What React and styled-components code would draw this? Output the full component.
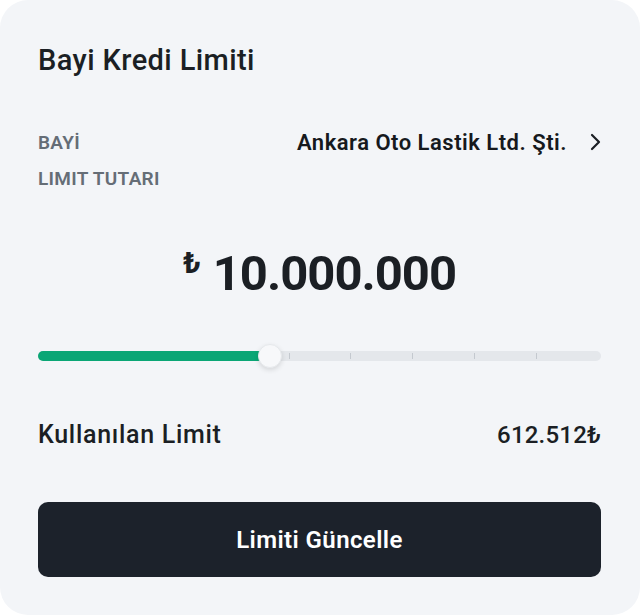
import React from 'react';
import styled, { createGlobalStyle } from 'styled-components';

const GlobalStyle = createGlobalStyle`
    html, body {
        margin: 0;
        padding: 0;
        background: #ffffff;
    }
    * {
        box-sizing: border-box;
    }
`

const ticks = [289, 350, 412, 474, 536];

export default function App() {
    const percent = 41.2;

    return (
        <>
            <GlobalStyle />
            <Card>
                <Title>Bayi Kredi Limiti</Title>

                <InfoRow>
                    <Label>BAYİ</Label>
                    <Dealer>
                        Ankara Oto Lastik Ltd. Şti.
                        <svg width="12" height="18" viewBox="0 0 12 18" fill="none">
                            <path d="M3 2l7 7-7 7" stroke="#1b1f24" strokeWidth="2.2" strokeLinecap="round" strokeLinejoin="round" />
                        </svg>
                    </Dealer>
                </InfoRow>
                <Label className='sub'>LIMIT TUTARI</Label>

                <Amount>
                    <Currency>₺</Currency>
                    <Value>10.000.000</Value>
                </Amount>

                <Slider>
                    <Track />
                    <Fill style={{ width: `${percent}%` }} />
                    {ticks.map((x) => (
                        <Tick key={x} style={{ left: x - 38 }} />
                    ))}
                    <Thumb style={{ left: `${percent}%` }} />
                </Slider>

                <UsedRow>
                    <span>Kullanılan Limit</span>
                    <span>612.512₺</span>
                </UsedRow>

                <Button>Limiti Güncelle</Button>
            </Card>
        </>
    )
}

const Card = styled.div`
    width: 640px;
    height: 615px;
    border-radius: 28px;
    background-color: #f3f5f8;
    padding: 42px 39px 0 38px;
    font-family: Roboto, "Noto Sans", sans-serif;
    color: #1b1f24;
    display: flex;
    flex-direction: column;
`
const Title = styled.h1`
    margin: 0;
    font-size: 29px;
    font-weight: 500;
    letter-spacing: 0.4px;
    line-height: 36px;
`
const InfoRow = styled.div`
    margin-top: 52px;
    display: flex;
    align-items: center;
    justify-content: space-between;
    height: 24px;
`
const Label = styled.div`
    font-size: 19px;
    font-weight: 600;
    letter-spacing: 0.3px;
    color: #656d76;
    &.sub{
        margin-top: 13px;
    }
`
const Dealer = styled.div`
    display: flex;
    align-items: center;
    gap: 22px;
    font-size: 22px;
    font-weight: 600;
    letter-spacing: 0.5px;
    color: #16191d;
`
const Amount = styled.div`
    margin-top: 54px;
    display: flex;
    justify-content: center;
    align-items: flex-start;
    gap: 12px;
`
const Currency = styled.span`
    font-size: 30px;
    font-weight: 700;
    line-height: 1;
    margin-top: 4px;
`
const Value = styled.span`
    font-size: 49px;
    font-weight: 700;
    letter-spacing: -1px;
    line-height: 60px;
`
const Slider = styled.div`
    position: relative;
    margin-top: 47px;
    height: 10px;
`
const Track = styled.div`
    position: absolute;
    inset: 0;
    border-radius: 5px;
    background-color: #e4e7eb;
`
const Fill = styled.div`
    position: absolute;
    left: 0;
    top: 0;
    bottom: 0;
    border-radius: 5px;
    background-color: #0aa675;
`
const Tick = styled.div`
    position: absolute;
    top: 2px;
    width: 1px;
    height: 6px;
    background-color: #c4c9cf;
`
const Thumb = styled.div`
    position: absolute;
    top: 50%;
    width: 24px;
    height: 24px;
    margin: -12px 0 0 -12px;
    border-radius: 50%;
    background-color: #f7f8fa;
    border: 1px solid #e6e9ec;
    box-shadow: rgba(0, 0, 0, 0.12) 0px 2px 5px;
`
const UsedRow = styled.div`
    margin-top: 59px;
    display: flex;
    justify-content: space-between;
    align-items: center;
    font-size: 25px;
    font-weight: 500;
    letter-spacing: 0.7px;
    line-height: 30px;
    span + span{
        letter-spacing: 0.2px;
        font-size: 24px;
    }
`
const Button = styled.button`
    margin-top: 52px;
    height: 75px;
    width: 100%;
    border: 0;
    outline: 0;
    border-radius: 10px;
    background-color: #1c222b;
    color: white;
    font-family: Roboto, "Noto Sans", sans-serif;
    font-size: 24px;
    font-weight: 600;
    letter-spacing: 0.4px;
    cursor: pointer;
`
